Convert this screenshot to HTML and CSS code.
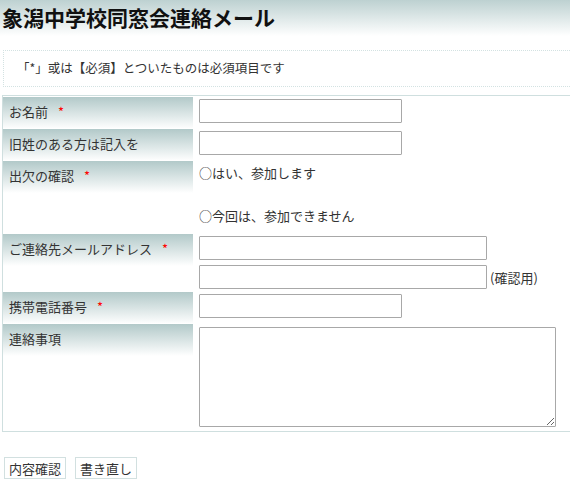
FILE: index.html
```html
<!DOCTYPE html>
<html lang="ja">
<head>
<meta charset="utf-8">
<title>象潟中学校同窓会連絡メール</title>
<link rel="stylesheet" href="styles.css">
</head>
<body>
<h1 class="title">象潟中学校同窓会連絡メール</h1>
<p class="notice">「*」或は【必須】とついたものは必須項目です</p>
<form class="form">
<table class="fields">
<tr>
<th class="label">お名前<span class="req">*</span></th>
<td class="cell"><input class="text short" type="text"></td>
</tr>
<tr>
<th class="label">旧姓のある方は記入を</th>
<td class="cell"><input class="text short" type="text"></td>
</tr>
<tr class="row-radio">
<th class="label">出欠の確認<span class="req">*</span></th>
<td class="cell radios">
<span class="opt">○はい、参加します</span>
<span class="opt">○今回は、参加できません</span>
</td>
</tr>
<tr>
<th class="label">ご連絡先メールアドレス<span class="req">*</span></th>
<td class="cell mails">
<div class="mail-line"><input class="text long" type="text"></div>
<div class="mail-line"><input class="text long" type="text"><span class="confirm">(確認用)</span></div>
</td>
</tr>
<tr>
<th class="label">携帯電話番号<span class="req">*</span></th>
<td class="cell"><input class="text short" type="text"></td>
</tr>
<tr>
<th class="label">連絡事項</th>
<td class="cell"><textarea class="memo"></textarea></td>
</tr>
</table>
<div class="buttons">
<button type="button" class="btn">内容確認</button>
<button type="button" class="btn">書き直し</button>
</div>
</form>
</body>
</html>
```
FILE: styles.css
```css
html, body {
  margin: 0;
  padding: 0;
  background: #fff;
}
body {
  font-family: "Noto Sans CJK JP", "Noto Sans", sans-serif;
  color: #333;
  font-size: 12.5px;
}
.title {
  margin: 0;
  height: 36px;
  padding: 0 2px;
  line-height: 34px;
  font-size: 21px;
  font-weight: bold;
  color: #111;
  background: linear-gradient(#bdd1d1, #ffffff);
}
.notice {
  margin: 14px 0 0 3px;
  height: 35px;
  line-height: 34px;
  padding: 0 13px;
  border: 1px dotted #d3e2e2;
  border-right: none;
  font-size: 12.5px;
  color: #333;
}
.form {
  margin: 0;
}
.fields {
  margin: 8px 0 0 2px;
  width: 568px;
  border-collapse: separate;
  border-spacing: 0 1px;
  border-top: 1px solid #cfdfdf;
  border-left: 1px solid #cfdfdf;
  border-bottom: 1px solid #cfdfdf;
}
.label {
  width: 178px;
  padding: 5px 6px 0 6px;
  text-align: left;
  vertical-align: top;
  font-weight: normal;
  font-size: 13px;
  color: #333;
  background: linear-gradient(#b2c9c9, #ffffff) no-repeat;
  background-size: 100% 32px;
  height: 26px;
}
.req {
  color: #f00;
  margin-left: 10px;
}
.cell {
  padding: 1px 0 0 6px;
  vertical-align: top;
  height: 29px;
}
.text {
  box-sizing: border-box;
  height: 24px;
  border: 1px solid #a8a8a8;
  border-radius: 1px;
  margin: 1px 0 0 0;
  padding: 0 3px;
  font-family: inherit;
  font-size: 13px;
  background: #fff;
  display: block;
}
.short { width: 203px; }
.long { width: 288px; }
.row-radio .cell {
  height: 70px;
}
.radios {
  display: flex;
  flex-direction: column;
  gap: 24px;
  padding-top: 2px;
  font-size: 13px;
}
.opt {
  display: block;
  line-height: 19px;
}
.mails {
  display: flex;
  flex-direction: column;
  gap: 5px;
  height: auto;
  padding-bottom: 2px;
}
.mail-line {
  display: flex;
  align-items: center;
}
.mail-line .text {
  margin: 0;
}
.mails .mail-line:first-child .text {
  margin-top: 1px;
}
.confirm {
  margin-left: 3px;
  font-size: 13px;
}
.memo {
  display: block;
  box-sizing: border-box;
  width: 357px;
  height: 100px;
  margin: 2px 0 3px 0;
  border: 1px solid #a8a8a8;
  border-radius: 1px;
  font-family: inherit;
}
.buttons {
  display: flex;
  gap: 9px;
  margin: 25px 0 0 4px;
}
.btn {
  height: 22px;
  padding: 0 4px;
  border: 1px solid #d2e0e0;
  background: #fff;
  font-family: inherit;
  font-size: 13px;
  color: #333;
  border-radius: 0;
}
```
